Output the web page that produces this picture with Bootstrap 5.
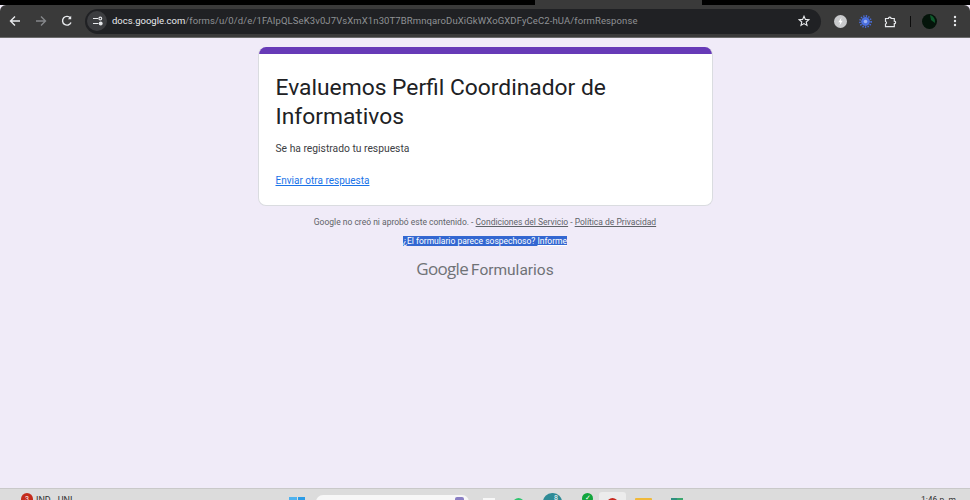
<!DOCTYPE html>
<html lang="es">
<head>
  <meta charset="UTF-8">
  <title>Evaluemos Perfil Coordinador de Informativos</title>
  <link href="https://cdn.jsdelivr.net/npm/bootstrap@5.3.2/dist/css/bootstrap.min.css" rel="stylesheet">
  <style>
    html, body { height: 500px; overflow: hidden; }
    body { background: #f0ebf8; font-family: Roboto, "Liberation Sans", sans-serif; display: flex; flex-direction: column; }

    /* browser chrome */
    .tabstrip { height: 5px; background: #000; flex: none; padding-left: 535px; }
    .active-tab { width: 167px; height: 5px; background: #3a3a3a; }
    .toolbar { height: 33px; background: #3a3a3a; flex: none; border-bottom: 1px solid #6b6b6b; border-top-left-radius: 6px; border-top-right-radius: 6px; padding-left: 2px; }
    .toolbar svg { display: block; flex: none; }
    .nav-ico { width: 26px; }
    .omnibox { height: 25px; width: 736px; background: #202124; border-radius: 13px; margin-left: 5px; padding: 0 11px 0 2px; flex: none; }
    .site-ico { width: 20px; height: 20px; border-radius: 50%; background: #3c3d40; flex: none; }
    .url { font-size: 9.5px; color: #8f9194; white-space: nowrap; margin-left: 5px; letter-spacing: .105px; }
    .url b { font-weight: 400; color: #e8eaed; letter-spacing: 0; }
    .tools { padding-left: 7px; }
    .slot { width: 25px; }
    .slot-sep { width: 14px; }
    .slot-avatar { width: 24px; }
    .slot-more { width: 28px; }
    .sep { width: 1px; height: 11px; background: #0c0c0c; }
    .avatar { width: 15px; height: 15px; border-radius: 50%; background: #04140a; overflow: hidden; }

    /* form */
    .form-wrap { flex: 1; min-height: 0; padding-top: 9px; }
    .form-col { width: 455px; }
    .form-card { border: 1px solid #dadce0; border-top: 0; border-radius: 8px; overflow: hidden; background: #fff; height: 159px; }
    .form-stripe { height: 7px; background: #673ab7; margin: 0 -1px; }
    .form-body { padding: 20px 17px 0; }
    .form-title { font-size: 22.8px; line-height: 28.5px; font-weight: 400; color: #202124; margin-bottom: 10px; }
    .form-msg { font-size: 10.3px; line-height: 16px; color: #3c4043; margin-bottom: 10px; }
    .form-link { font-size: 10px; line-height: 16px; color: #1a73e8; }
    .foot { font-size: 8.5px; line-height: 12px; color: #5f6368; }
    .foot a { color: #5f6368; }
    .foot-disclaimer { margin-top: 10px; }
    .foot-report { margin-top: 7px; }
    .selected { background: #3367d1; color: #fff; }
    .selected a { color: #fff; }
    .brand { margin-top: 11px; font-size: 15.5px; line-height: 22px; color: #6f7276; }
    .brand .g { font-family: "Open Sans", Roboto, sans-serif; font-weight: 500; letter-spacing: -.7px; font-size: 17px; margin-right: 3px; }

    /* taskbar, icons are cut off by the bottom of the window like in the screenshot */
    .taskbar { height: 12px; flex: none; background: #dcdcdc; border-top: 1px solid #c9c9c9; overflow: hidden; }
    .taskbar > div { flex: none; }
    .notif { margin: 4px 0 0 21px; width: 12px; height: 12px; border-radius: 50%; background: #c42b1c; color: #fff; font-size: 7px; line-height: 12px; text-align: center; }
    .weather { margin: 6px 0 0 3px; width: 37px; font-size: 9px; line-height: 10px; color: #333; white-space: nowrap; }
    .win { margin: 8px 0 0 216px; width: 16px; height: 12px; background: linear-gradient(90deg, #4fb2ee 0 48%, transparent 48% 54%, #2b9be6 54%); }
    .search { margin: 6px 0 0 11px; width: 153px; height: 14px; background: #f7f7f7; border-radius: 7px; padding: 2px 5px 0 0; }
    .search span { display: block; width: 9px; height: 9px; border-radius: 2px; background: #8a7fc4; margin-left: auto; }
    .t-white { margin: 9px 0 0 14px; width: 12px; height: 8px; background: #f7f7f7; }
    .t-green { margin: 9px 0 0 18px; width: 11px; height: 11px; border-radius: 50%; background: #2fc46f; }
    .t-teal { margin: 4px 0 0 19px; width: 19px; height: 14px; border-radius: 9px 9px 0 0; background: #2f8b96; color: #fff; font-size: 7px; line-height: 10px; text-align: right; padding-right: 4px; }
    .t-check { margin: 4px 0 0 20px; width: 11px; height: 11px; border-radius: 50%; background: #12a53c; color: #fff; font-size: 7px; line-height: 11px; text-align: center; }
    .t-tile { margin: 3px 0 0 6px; width: 27px; height: 14px; background: #ececec; border-radius: 3px 3px 0 0; padding: 6px 0 0 8px; }
    .t-tile span { display: block; width: 11px; height: 11px; border-radius: 50%; background: #c8281e; }
    .t-folder { margin: 9px 0 0 9px; width: 17px; height: 8px; background: #f0b93a; border-radius: 1px 1px 0 0; }
    .t-sheet { margin: 9px 0 0 19px; width: 12px; height: 8px; background: linear-gradient(90deg, #2f8f7f 0 50%, #3aa76d 50%); }
    .clock { margin: 6px 0 0 238px; font-size: 8.5px; line-height: 10px; color: #333; white-space: nowrap; }
  </style>
</head>
<body>

<div class="tabstrip"><div class="active-tab"></div></div>

<div class="toolbar d-flex align-items-center">
  <div class="nav-ico d-flex justify-content-center">
    <svg width="12" height="12" viewBox="0 0 12 12" fill="none" stroke="#e8eaed" stroke-width="1.4"><path d="M11 6H1.5M6 1.5 1.5 6 6 10.5"/></svg>
  </div>
  <div class="nav-ico d-flex justify-content-center">
    <svg width="12" height="12" viewBox="0 0 12 12" fill="none" stroke="#85878a" stroke-width="1.4"><path d="M1 6h9.5M6 1.5 10.5 6 6 10.5"/></svg>
  </div>
  <div class="nav-ico d-flex justify-content-center">
    <svg width="12" height="12" viewBox="0 0 12 12" fill="none" stroke="#e8eaed" stroke-width="1.4"><path d="M10 7.5A4.4 4.4 0 1 1 9.4 3"/><path d="M10.2 .8v3.4H6.8" fill="#e8eaed" stroke="none"/></svg>
  </div>
  <div class="omnibox d-flex align-items-center">
    <div class="site-ico d-flex align-items-center justify-content-center">
      <svg width="11" height="10" viewBox="0 0 11 10" fill="none" stroke="#e8eaed" stroke-width="1.1"><path d="M1 2.5h5M1 7.5h5.5"/><circle cx="8.3" cy="2.5" r="1.4"/><circle cx="8.7" cy="7.5" r="1.4" fill="#e8eaed"/></svg>
    </div>
    <div class="url flex-grow-1"><b>docs.google.com</b>/forms/u/0/d/e/1FAIpQLSeK3v0J7VsXmX1n30T7BRmnqaroDuXiGkWXoGXDFyCeC2-hUA/formResponse</div>
    <svg width="12" height="12" viewBox="0 0 12 12" fill="none" stroke="#e8eaed" stroke-width="1.1"><path d="M6 1.2 7.4 4.4l3.5.3-2.7 2.3.8 3.4L6 8.6l-3 1.8.8-3.4L1.1 4.7l3.5-.3z"/></svg>
  </div>
  <div class="tools d-flex align-items-center">
    <div class="slot d-flex justify-content-center">
      <svg width="13" height="13" viewBox="0 0 12 12"><circle cx="6" cy="6" r="6" fill="#c9cacc"/><path d="M7 2 4 6.6h1.8L5 10l3-4.6H6.2z" fill="#fff"/></svg>
    </div>
    <div class="slot d-flex justify-content-center">
      <svg width="13" height="13" viewBox="0 0 13 13"><circle cx="6.5" cy="6.5" r="4.4" fill="#4a6fe0"/><circle cx="6.5" cy="6.5" r="5.6" fill="none" stroke="#4a6fe0" stroke-width="1.6" stroke-dasharray="1.3 1.3"/><circle cx="6.5" cy="6.5" r="1.8" fill="#9db2f2"/></svg>
    </div>
    <div class="slot d-flex justify-content-center">
      <svg width="13" height="13" viewBox="0 0 13 13" fill="none" stroke="#e8eaed" stroke-width="1.2"><path d="M1.5 3.5h3a1.3 1.3 0 0 1 2.6 0h3.2v2.6a1.3 1.3 0 0 1 0 2.6v3H1.5V9a1.4 1.4 0 0 0 1-1.3 1.4 1.4 0 0 0-1-1.3z"/></svg>
    </div>
    <div class="slot-sep d-flex justify-content-center"><div class="sep"></div></div>
    <div class="slot-avatar d-flex justify-content-center">
      <div class="avatar"><svg width="15" height="15" viewBox="0 0 15 15"><path d="M8 1a7 7 0 0 1 5 8L9 6z" fill="#0e5a2c"/></svg></div>
    </div>
    <div class="slot-more d-flex justify-content-center">
      <svg width="4" height="12" viewBox="0 0 4 12" fill="#e8eaed"><circle cx="2" cy="2" r="1.2"/><circle cx="2" cy="6" r="1.2"/><circle cx="2" cy="10" r="1.2"/></svg>
    </div>
  </div>
</div>

<div class="form-wrap d-flex flex-column align-items-center">
  <div class="form-col">
    <div class="form-card">
      <div class="form-stripe"></div>
      <div class="form-body">
        <h1 class="form-title">Evaluemos Perfil Coordinador de Informativos</h1>
        <p class="form-msg">Se ha registrado tu respuesta</p>
        <a class="form-link" href="#">Enviar otra respuesta</a>
      </div>
    </div>
    <div class="foot foot-disclaimer text-center">Google no creó ni aprobó este contenido. - <a href="#">Condiciones del Servicio</a> - <a href="#">Política de Privacidad</a></div>
    <div class="foot foot-report text-center"><span class="selected">¿El formulario parece sospechoso? <a href="#">Informe</a></span></div>
    <div class="brand text-center"><span class="g">Google</span>Formularios</div>
  </div>
</div>

<div class="taskbar d-flex align-items-start">
  <div class="notif">3</div>
  <div class="weather">IND - UNI</div>
  <div class="win"></div>
  <div class="search"><span></span></div>
  <div class="t-white"></div>
  <div class="t-green"></div>
  <div class="t-teal">8</div>
  <div class="t-check">✓</div>
  <div class="t-tile"><span></span></div>
  <div class="t-folder"></div>
  <div class="t-sheet"></div>
  <div class="clock">1:46 p. m.</div>
</div>

<script src="https://cdn.jsdelivr.net/npm/bootstrap@5.3.2/dist/js/bootstrap.bundle.min.js"></script>
</body>
</html>
